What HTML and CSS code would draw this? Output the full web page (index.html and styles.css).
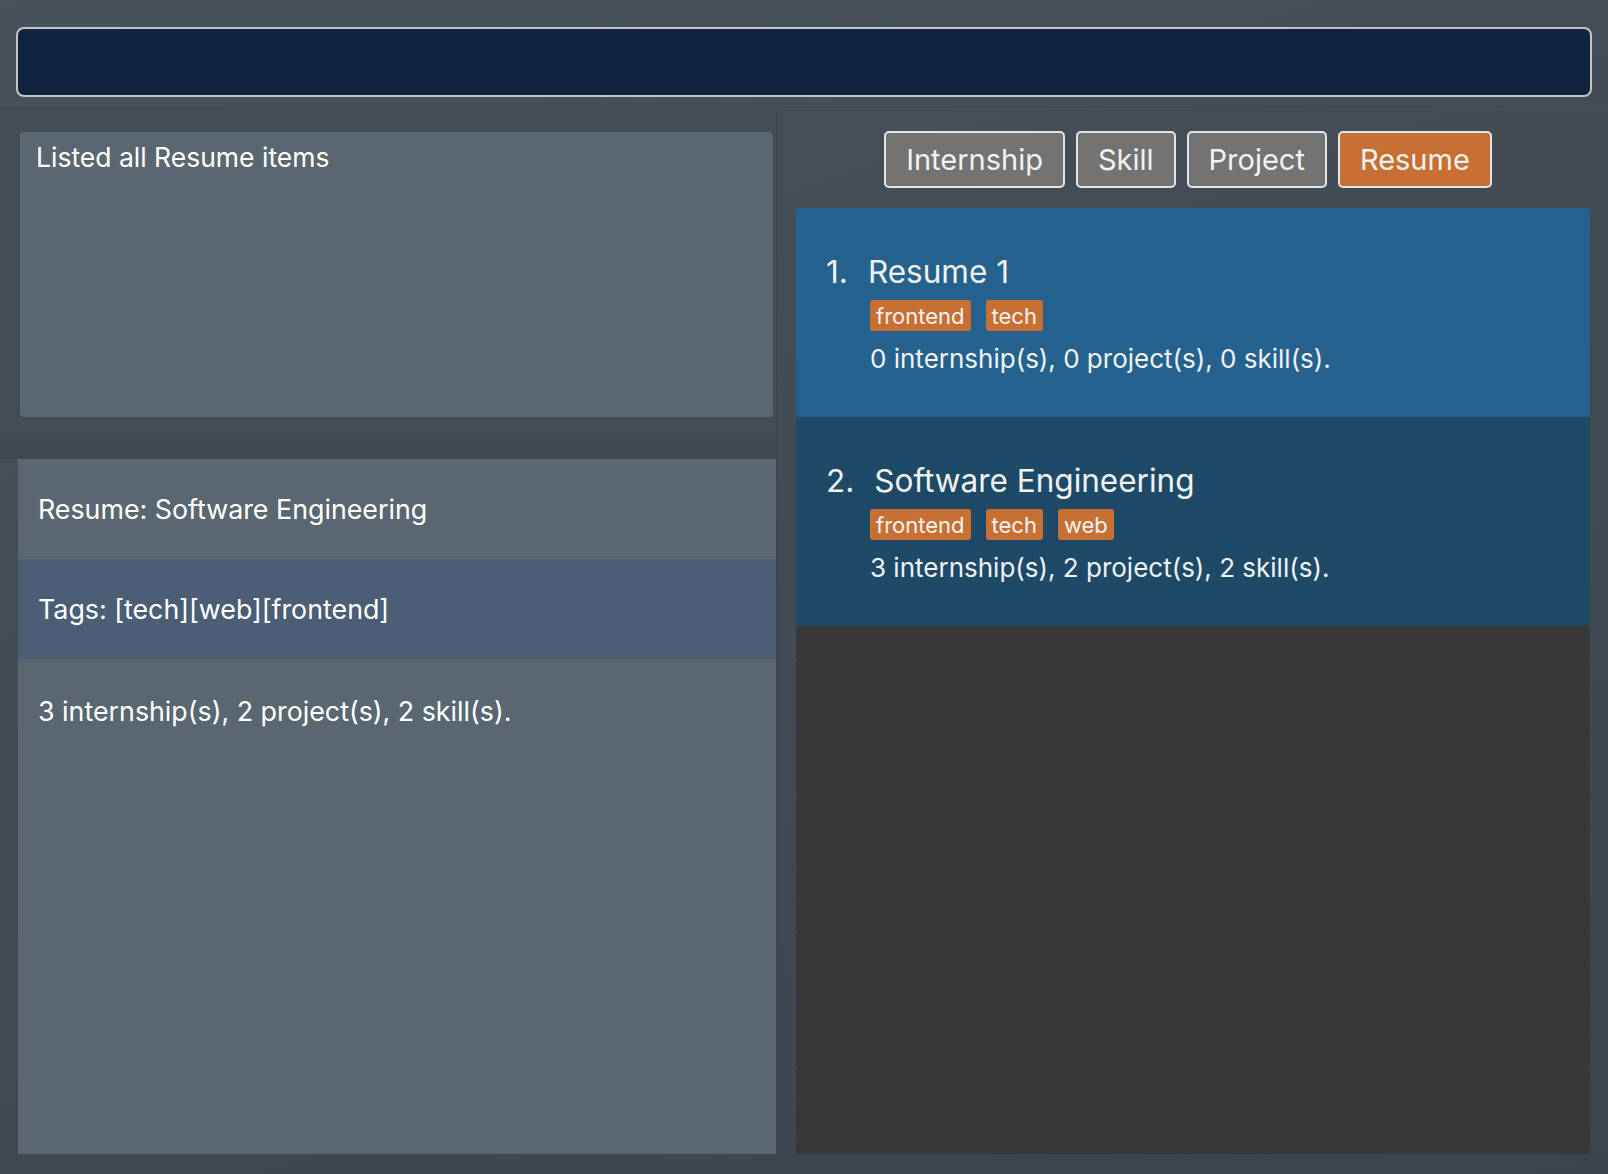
FILE: index.html
```html
<!DOCTYPE html>
<html lang="en">
<head>
<meta charset="utf-8">
<title>Resume</title>
<link rel="stylesheet" href="styles.css">
</head>
<body>
<div class="app">
  <header class="top">
    <div class="command-box"></div>
  </header>
  <main class="main">
    <section class="left">
      <div class="result-pane">
        <div class="result-box">Listed all Resume items</div>
      </div>
      <div class="strip"></div>
      <div class="detail">
        <div class="detail-row">Resume: Software Engineering</div>
        <div class="detail-row detail-tags">Tags: [tech][web][frontend]</div>
        <div class="detail-row detail-last">3 internship(s), 2 project(s), 2 skill(s).</div>
      </div>
    </section>
    <section class="right">
      <nav class="tabs">
        <button class="tab">Internship</button>
        <button class="tab">Skill</button>
        <button class="tab">Project</button>
        <button class="tab tab-active">Resume</button>
      </nav>
      <div class="list">
        <div class="card card-selected">
          <div class="card-head"><span class="card-id">1.</span><span class="card-name">Resume 1</span></div>
          <div class="card-tags"><span class="tag">frontend</span><span class="tag">tech</span></div>
          <div class="card-stats">0 internship(s), 0 project(s), 0 skill(s).</div>
        </div>
        <div class="card">
          <div class="card-head"><span class="card-id">2.</span><span class="card-name">Software Engineering</span></div>
          <div class="card-tags"><span class="tag">frontend</span><span class="tag">tech</span><span class="tag">web</span></div>
          <div class="card-stats">3 internship(s), 2 project(s), 2 skill(s).</div>
        </div>
        <div class="empty"></div><div class="empty"></div><div class="empty"></div><div class="empty"></div>
        <div class="empty"></div><div class="empty"></div><div class="empty"></div><div class="empty"></div>
        <div class="empty"></div><div class="empty"></div><div class="empty"></div><div class="empty"></div>
        <div class="empty"></div><div class="empty"></div><div class="empty"></div><div class="empty"></div>
      </div>
    </section>
  </main>
</div>
</body>
</html>
```
FILE: styles.css
```css
* { box-sizing: border-box; }

html, body {
  margin: 0;
  padding: 0;
}

body {
  width: 1608px;
  height: 1174px;
  overflow: hidden;
  font-family: Inter, "Noto Sans", sans-serif;
  color: #ffffff;
  background: linear-gradient(160deg, #48525b 0%, #424b54 50%, #3b444d 100%);
}

.app {
  display: flex;
  flex-direction: column;
  height: 1174px;
}

.top {
  flex: none;
  height: 108px;
  padding: 27px 16px 0 16px;
  border-bottom: 1px solid #40484f;
}

.command-box {
  height: 70px;
  background: #10243f;
  border: 2px solid #c2c4c6;
  border-radius: 8px;
}

.main {
  flex: 1;
  display: grid;
  grid-template-columns: 776px 1fr;
  grid-template-rows: minmax(0, 1fr);
  min-height: 0;
}

/* left column */
.left {
  display: flex;
  flex-direction: column;
  min-height: 0;
  padding-bottom: 20px;
}

.result-pane {
  flex: none;
  height: 331px;
  padding: 24px 3px 0 20px;
  background: #444d56;
  border-top-right-radius: 4px;
  border-bottom-right-radius: 4px;
}

.result-box {
  height: 285px;
  background: #5b6770;
  border-radius: 4px;
  padding: 9px 16px;
  font-size: 26.5px;
  line-height: 32px;
  color: #ffffff;
}

.strip {
  flex: none;
  height: 20px;
  background: #40484f;
}

.detail {
  flex: 1;
  min-height: 0;
  margin-left: 18px;
  display: flex;
  flex-direction: column;
  background: #5a6770;
}

.detail-row {
  flex: none;
  height: 100px;
  padding: 0 20px;
  display: flex;
  align-items: center;
  font-size: 26.8px;
  color: #ffffff;
  background: #5a6770;
}

.detail-tags {
  background: #4b5e75;
}

.detail-last {
  flex: 1;
  align-items: flex-start;
  padding-top: 36px;
}

/* right column */
.right {
  display: flex;
  flex-direction: column;
  min-height: 0;
  overflow: hidden;
  padding: 23px 18px 20px 18px;
  border-left: 2px solid #3e474f;
}

.tabs {
  flex: none;
  display: flex;
  justify-content: center;
  gap: 11px;
  height: 57px;
  margin-bottom: 20px;
  padding-right: 10px;
}

.tab {
  height: 57px;
  padding: 0 20px;
  font-family: Inter, "Noto Sans", sans-serif;
  font-size: 29px;
  color: #f2f2f2;
  background: #737373;
  border: 2px solid #e4e4e4;
  border-radius: 5px;
}

.tab-active {
  background: #c87033;
}

.list {
  flex: 1;
  overflow: hidden;
  display: flex;
  flex-direction: column;
  min-height: 0;
}

.card {
  flex: none;
  padding: 44px 30px 44px 30px;
  background: #1e4a68;
  border-radius: 3px;
}

.card-selected {
  background: #25628d;
}

.card-head {
  display: flex;
  align-items: center;
  height: 38px;
  font-size: 31.5px;
  color: #f0f2f4;
}

.card-id {
  margin-right: 20px;
}

.card-tags {
  display: flex;
  gap: 15px;
  margin-top: 10px;
  padding-left: 44px;
}

.tag {
  height: 31px;
  padding: 0 6px;
  display: inline-flex;
  align-items: center;
  font-size: 22px;
  color: #f4f4f4;
  background: #c87033;
  border-radius: 3px;
}

.card-stats {
  margin-top: 14px;
  padding-left: 44px;
  height: 28px;
  line-height: 28px;
  font-size: 26px;
  color: #f0f2f4;
}

.empty {
  flex: none;
  height: 34px;
  background: #383838;
  border-radius: 3px;
}
```
